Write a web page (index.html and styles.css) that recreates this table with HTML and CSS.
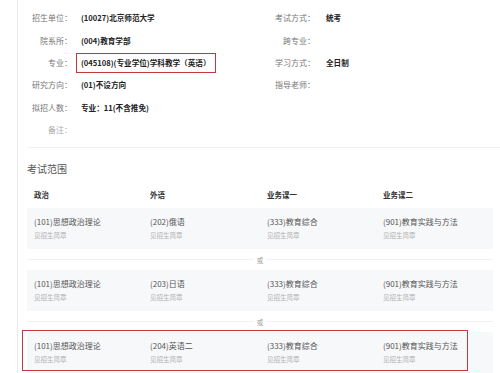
FILE: index.html
```html
<!DOCTYPE html>
<html lang="zh-CN">
<head>
<meta charset="utf-8">
<link rel="stylesheet" href="styles.css">
</head>
<body>
<div class="page">
  <div class="info">
    <div class="field"><span class="label">招生单位：</span><span class="value">(10027)北京师范大学</span></div>
    <div class="field right"><span class="label">考试方式：</span><span class="value">统考</span></div>
    <div class="field"><span class="label">院系所：</span><span class="value">(004)教育学部</span></div>
    <div class="field right"><span class="label">跨专业：</span><span class="value"></span></div>
    <div class="field"><span class="label">专业：</span><span class="value boxed">(045108)(专业学位)学科教学（英语）</span></div>
    <div class="field right"><span class="label">学习方式：</span><span class="value">全日制</span></div>
    <div class="field"><span class="label">研究方向：</span><span class="value">(01)不设方向</span></div>
    <div class="field right"><span class="label">指导老师：</span><span class="value"></span></div>
    <div class="field"><span class="label">拟招人数：</span><span class="value">专业：11(不含推免)</span></div>
    <div class="field right"></div>
    <div class="field"><span class="label light">备注：</span><span class="value"></span></div>
  </div>

  <h2 class="title">考试范围</h2>

  <div class="thead">
    <div>政治</div><div>外语</div><div>业务课一</div><div>业务课二</div>
  </div>

  <div class="row">
    <div class="cell"><div class="name">(101)思想政治理论</div><div class="note">见招生简章</div></div>
    <div class="cell"><div class="name">(202)俄语</div><div class="note">见招生简章</div></div>
    <div class="cell"><div class="name">(333)教育综合</div><div class="note">见招生简章</div></div>
    <div class="cell"><div class="name">(901)教育实践与方法</div><div class="note">见招生简章</div></div>
  </div>

  <div class="divider"><span>或</span></div>

  <div class="row">
    <div class="cell"><div class="name">(101)思想政治理论</div><div class="note">见招生简章</div></div>
    <div class="cell"><div class="name">(203)日语</div><div class="note">见招生简章</div></div>
    <div class="cell"><div class="name">(333)教育综合</div><div class="note">见招生简章</div></div>
    <div class="cell"><div class="name">(901)教育实践与方法</div><div class="note">见招生简章</div></div>
  </div>

  <div class="divider"><span>或</span></div>

  <div class="row marked">
    <div class="cell"><div class="name">(101)思想政治理论</div><div class="note">见招生简章</div></div>
    <div class="cell"><div class="name">(204)英语二</div><div class="note">见招生简章</div></div>
    <div class="cell"><div class="name">(333)教育综合</div><div class="note">见招生简章</div></div>
    <div class="cell"><div class="name">(901)教育实践与方法</div><div class="note">见招生简章</div></div>
  </div>
</div>
</body>
</html>
```

FILE: styles.css
```css
html, body {
  margin: 0;
  padding: 0;
  background: #fff;
}
body {
  font-family: "Noto Sans CJK SC", "Noto Sans", sans-serif;
  color: #333;
  width: 500px;
  height: 373px;
  overflow: hidden;
}
.page {
  margin-left: 17px;
  border-left: 1px solid #ececec;
  padding-left: 9px;
  min-height: 373px;
  box-sizing: border-box;
}
.info {
  display: grid;
  grid-template-columns: 243px 1fr;
  grid-auto-rows: 22.4px;
  padding-top: 7px;
  padding-bottom: 6px;
  border-bottom: 1px solid #f1f1f1;
}
.field {
  display: flex;
  align-items: center;
  font-size: 8px;
  line-height: 12px;
}
.label {
  width: 45px;
  flex: none;
  text-align: right;
  color: #777;
}
.label.light {
  color: #aaa;
}
.value {
  margin-left: 9px;
  color: #222;
  font-weight: 700;
  font-size: 7.6px;
}
.right .value {
  margin-left: 11px;
}
.boxed {
  margin-left: 4px;
  padding: 3px 4px;
  border: 1.5px solid #c8363e;
}
.title {
  margin: 14px 0 0 0;
  font-size: 10px;
  line-height: 14px;
  font-weight: 400;
  color: #555;
}
.thead {
  display: grid;
  grid-template-columns: 116px 117px 116px 1fr;
  padding-left: 7px;
  margin-top: 13px;
  font-size: 7.5px;
  line-height: 12px;
  font-weight: 700;
  color: #333;
  width: 466px;
  box-sizing: border-box;
}
.row {
  position: relative;
  display: grid;
  grid-template-columns: 116px 117px 116px 1fr;
  padding: 8px 0 0 7px;
  margin-top: 7px;
  width: 466px;
  height: 41px;
  box-sizing: border-box;
  background: #f7f8fa;
}
.divider + .row {
  margin-top: 0;
}
.name {
  font-size: 8px;
  line-height: 12px;
  color: #555;
}
.note {
  font-size: 6.5px;
  line-height: 14px;
  color: #b0b0b0;
}
.divider {
  position: relative;
  width: 466px;
  height: 21px;
  display: flex;
  align-items: center;
  justify-content: center;
}
.divider::before {
  content: "";
  position: absolute;
  left: 0;
  right: 0;
  top: 10px;
  border-top: 1px solid #f1f1f1;
}
.divider span {
  position: relative;
  background: #fff;
  padding: 0 3px;
  font-size: 6.5px;
  line-height: 10px;
  color: #999;
}
.marked::after {
  content: "";
  position: absolute;
  left: -5px;
  top: -2px;
  width: 446px;
  height: 41px;
  border: 1.5px solid #c8363e;
  box-sizing: border-box;
}
```
